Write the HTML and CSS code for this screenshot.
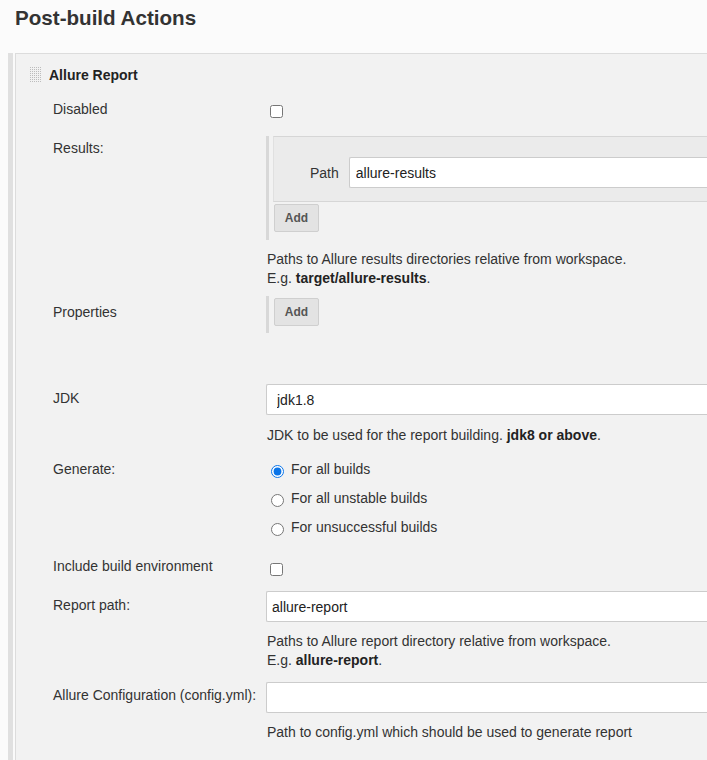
FILE: index.html
```html
<!DOCTYPE html>
<html>
<head>
<meta charset="utf-8">
<link rel="stylesheet" href="styles.css">
</head>
<body>
<div class="page">
  <h1 class="title">Post-build Actions</h1>
  <div class="section">
    <div class="panel">
      <div class="panel-head">
        <svg class="grip" width="12" height="16" viewBox="0 0 12 16">
          <g fill="#bdbdbd">
            <rect x="0" y="0" width="12" height="1"/><rect x="0" y="2" width="12" height="1"/>
            <rect x="0" y="4" width="12" height="1"/><rect x="0" y="6" width="12" height="1"/>
            <rect x="0" y="8" width="12" height="1"/><rect x="0" y="10" width="12" height="1"/>
            <rect x="0" y="12" width="12" height="1"/><rect x="0" y="14" width="12" height="1"/>
          </g>
          <g fill="#f2f2f2">
            <rect x="1" y="0" width="1" height="16"/><rect x="3" y="0" width="1" height="16"/>
            <rect x="5" y="0" width="1" height="16"/><rect x="7" y="0" width="1" height="16"/>
            <rect x="9" y="0" width="1" height="16"/><rect x="11" y="0" width="1" height="16"/>
          </g>
        </svg>
        <span class="panel-name">Allure Report</span>
      </div>

      <div class="row row-disabled">
        <div class="row-label">Disabled</div>
        <div class="field"><input type="checkbox" class="check check-disabled"></div>
      </div>

      <div class="row row-results">
        <div class="row-label label-results">Results:</div>
        <div class="field">
          <div class="repeated">
            <div class="chunk">
              <span class="chunk-label">Path</span>
              <input type="text" class="text text-path" value="allure-results">
            </div>
            <button class="add-btn">Add</button>
          </div>
        </div>
      </div>
      <div class="help help-results">
        Paths to Allure results directories relative from workspace.<br>
        E.g. <b>target/allure-results</b>.
      </div>

      <div class="row row-props">
        <div class="row-label label-props">Properties</div>
        <div class="field">
          <div class="repeated repeated-props">
            <button class="add-btn add-props">Add</button>
          </div>
        </div>
      </div>

      <div class="row row-jdk">
        <div class="row-label label-input">JDK</div>
        <div class="field"><input type="text" class="text text-jdk" value="jdk1.8"></div>
      </div>
      <div class="help help-jdk">JDK to be used for the report building. <b>jdk8 or above</b>.</div>

      <div class="row row-generate">
        <div class="row-label label-input">Generate:</div>
        <div class="field">
          <label class="radio-row"><input type="radio" name="gen" class="radio" checked><span class="radio-text">For all builds</span></label>
          <label class="radio-row"><input type="radio" name="gen" class="radio"><span class="radio-text">For all unstable builds</span></label>
          <label class="radio-row"><input type="radio" name="gen" class="radio"><span class="radio-text">For unsuccessful builds</span></label>
        </div>
      </div>

      <div class="row row-include">
        <div class="row-label">Include build environment</div>
        <div class="field"><input type="checkbox" class="check check-include"></div>
      </div>

      <div class="row row-report">
        <div class="row-label label-input">Report path:</div>
        <div class="field"><input type="text" class="text text-report" value="allure-report"></div>
      </div>
      <div class="help help-report">
        Paths to Allure report directory relative from workspace.<br>
        E.g. <b>allure-report</b>.
      </div>

      <div class="row row-config">
        <div class="row-label label-config">Allure Configuration (config.yml):</div>
        <div class="field"><input type="text" class="text text-config" value=""></div>
      </div>
      <div class="help help-config">Path to config.yml which should be used to generate report</div>
    </div>
  </div>
</div>
</body>
</html>
```

FILE: styles.css
```css
html, body {
  margin: 0;
  padding: 0;
  overflow: hidden;
}
body {
  background: #fbfbfb;
  font-family: "Liberation Sans", Arial, sans-serif;
  font-size: 14px;
  color: #333;
}
.page {
  height: 760px;
}
.title {
  margin: 0;
  padding: 6px 0 0 15px;
  font-size: 20.6px;
  line-height: 24px;
  font-weight: bold;
  color: #333;
  height: 24px;
  margin-bottom: 23px;
}
.section {
  margin-left: 8px;
  border-left: 5px solid #e0e0e0;
  padding-left: 2px;
  background: #fafafa;
  height: 713px;
}
.panel {
  margin-top: 1px;
  border-top: 1px solid #dcdcdc;
  border-left: 1px solid #dcdcdc;
  background: #f2f2f2;
  height: 712px;
  overflow: hidden;
}
.panel-head {
  display: flex;
  align-items: center;
  margin-top: 11px;
  height: 20px;
  padding-left: 14px;
}
.grip {
  display: block;
  margin-right: 7px;
}
.panel-name {
  font-weight: bold;
  color: #222;
  line-height: 20px;
}
.row {
  display: grid;
  grid-template-columns: 250px 1fr;
}
.row-label {
  padding-left: 37px;
  line-height: 20px;
  color: #333;
}
.field {
  display: flex;
  flex-direction: column;
  align-items: flex-start;
}
.check {
  width: 13px;
  height: 13px;
  margin: 0 0 0 4px;
}
.row-disabled { margin-top: 14px; }
.check-disabled { margin-top: 6px; }

.row-results { margin-top: 17px; }
.label-results { padding-top: 2px; }
.repeated {
  align-self: stretch;
  border-left: 3px solid #d8d8d8;
  padding: 0 0 8px 4px;
}
.chunk {
  display: flex;
  align-items: center;
  background: #ebebeb;
  border-top: 1px solid #d6d6d6;
  border-bottom: 1px solid #d6d6d6;
  border-left: 1px solid #e0e0e0;
  padding: 20px 0 13px 36px;
}
.chunk-label {
  margin-right: 10px;
  line-height: 20px;
}
.text {
  box-sizing: border-box;
  height: 31px;
  border: 1px solid #cccccc;
  border-right: none;
  border-radius: 2px 0 0 2px;
  background: #fff;
  font-family: "Liberation Sans", Arial, sans-serif;
  font-size: 14px;
  color: #222;
  margin: 0;
  outline: none;
}
.text-path {
  flex: 1;
  min-width: 0;
  padding: 0 6px;
}
.text-jdk, .text-report, .text-config {
  width: 100%;
}
.text-jdk { padding: 0 10px; }
.text-report { padding: 0 5px; }
.text-config { padding: 0 5px; }

.add-btn {
  display: block;
  margin: 2px 0 0 1px;
  width: 45px;
  height: 28px;
  padding: 0;
  border: 1px solid #cfcfcf;
  border-radius: 2px;
  background: #e3e3e3;
  font-family: "Liberation Sans", Arial, sans-serif;
  font-size: 12px;
  font-weight: bold;
  color: #555;
}
.help {
  margin-left: 251px;
  line-height: 19px;
  color: #333;
}
.help b { color: #222; }
.help-results { margin-top: 10px; }

.row-props { margin-top: 8px; }
.label-props { padding-top: 6px; }
.repeated-props {
  align-self: flex-start;
  padding-bottom: 7px;
}
.add-props { margin-top: 2px; }

.label-input { padding-top: 4px; }
.row-jdk { margin-top: 51px; }
.help-jdk { margin-top: 11px; }

.row-generate { margin-top: 10px; }
.radio-row {
  display: flex;
  align-items: flex-start;
  height: 29px;
}
.radio {
  width: 13px;
  height: 13px;
  margin: 10px 0 0 5px;
  accent-color: #0a74e8;
}
.radio-text {
  margin: 4px 0 0 7px;
  line-height: 20px;
}

.row-include { margin-top: 14px; }
.check-include { margin-top: 7px; }

.row-report { margin-top: 15px; }
.help-report { margin-top: 10px; }

.row-config { margin-top: 12px; }
.label-config { padding-top: 3px; }
.help-config { margin-top: 10px; }
```
